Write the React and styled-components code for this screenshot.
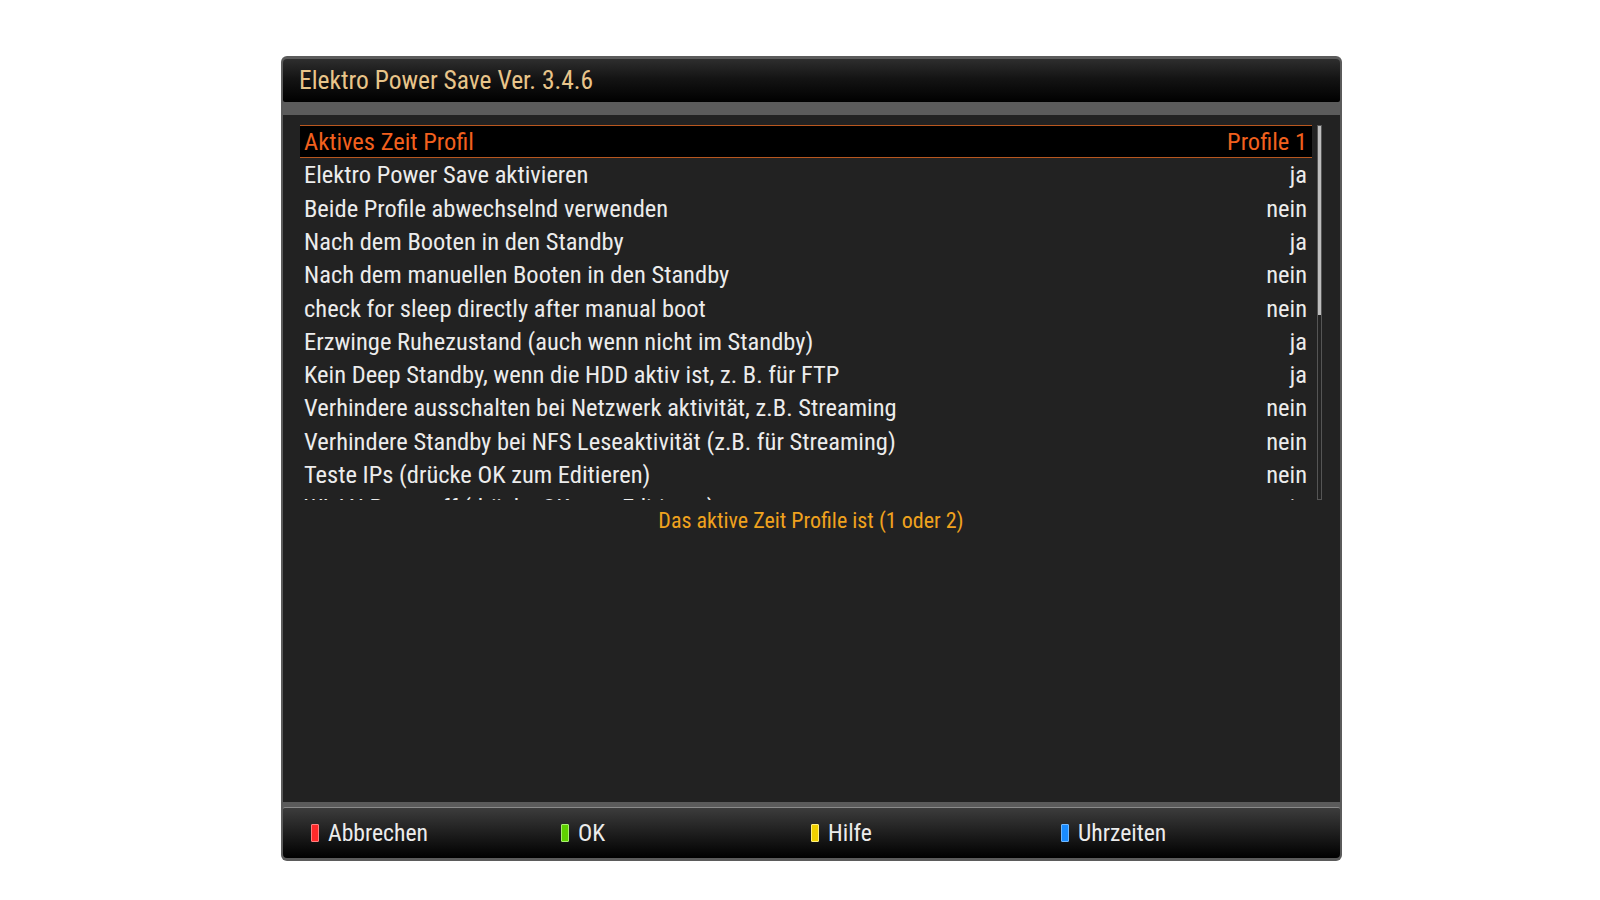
import React from 'react';
import styled, { createGlobalStyle } from 'styled-components';

const GlobalStyle = createGlobalStyle`
  body {
    margin: 0;
    background: #ffffff;
    font-family: "Roboto Condensed", Roboto, sans-serif;
    font-stretch: condensed;
  }
`;

const Page = styled.div`
  width: 1600px;
  height: 900px;
  padding: 56px 0 0 281px;
  box-sizing: border-box;
`;

const Frame = styled.div`
  width: 1061px;
  height: 805px;
  box-sizing: border-box;
  padding: 3px 2px 3px 2px;
  background: #5b5b5b;
  border-radius: 6px;
  display: flex;
  flex-direction: column;
`;

const TitleBar = styled.div`
  height: 43px;
  border-radius: 4px 4px 2px 2px;
  background: linear-gradient(to bottom, #2e2e2e 0%, #141414 45%, #000 100%);
  display: flex;
  align-items: center;
  padding-left: 16px;
  font-size: 25.5px;
  color: #e8c58a;
`;

const Content = styled.div`
  margin-top: 13px;
  height: 688px;
  background: #222222;
  padding: 10px 18px 0 17px;
  box-sizing: border-box;
  display: flex;
  flex-direction: column;
`;

const ListArea = styled.div`
  display: flex;
  gap: 5px;
  height: 375px;
`;

const List = styled.div`
  flex: 1;
  overflow: hidden;
`;

const Row = styled.div`
  height: 33.3px;
  box-sizing: border-box;
  display: flex;
  align-items: center;
  justify-content: space-between;
  padding: 0 5px 0 4px;
  font-size: 24.5px;
  white-space: nowrap;
  color: ${({ $active }) => ($active ? '#f2601e' : '#ececec')};
  background: ${({ $active }) => ($active ? '#000' : 'transparent')};
  border-top: 1px solid ${({ $active }) => ($active ? '#b8571f' : 'transparent')};
  border-bottom: 1px solid ${({ $active }) => ($active ? '#b8571f' : 'transparent')};
`;

const Scrollbar = styled.div`
  width: 5px;
  box-sizing: border-box;
  border: 1px solid #555;
  position: relative;
`;

const Thumb = styled.div`
  position: absolute;
  left: 0;
  right: 0;
  top: 0;
  height: 189px;
  background: #bdbdbd;
`;

const Description = styled.div`
  text-align: center;
  color: #f0a21e;
  font-size: 22px;
  padding-top: 8px;
`;

const Footer = styled.div`
  margin-top: 5px;
  height: 50px;
  border-radius: 2px 2px 4px 4px;
  border-top: 1px solid #8a8a8a;
  background: linear-gradient(to bottom, #3c3c3c 0%, #1e1e1e 50%, #000 100%);
  display: grid;
  grid-template-columns: repeat(4, 250px);
  padding-left: 28px;
  align-items: center;
`;

const KeyHint = styled.div`
  display: flex;
  align-items: center;
  gap: 9px;
  font-size: 23.7px;
  color: #ececec;
`;

const ColorKey = styled.span`
  width: 8px;
  height: 18px;
  box-sizing: border-box;
  background: ${({ $color }) => $color};
  border: 1px solid ${({ $edge }) => $edge};
  border-radius: 1px;
`;

const rows = [
  ['Aktives Zeit Profil', 'Profile 1'],
  ['Elektro Power Save aktivieren', 'ja'],
  ['Beide Profile abwechselnd verwenden', 'nein'],
  ['Nach dem Booten in den Standby', 'ja'],
  ['Nach dem manuellen Booten in den Standby', 'nein'],
  ['check for sleep directly after manual boot', 'nein'],
  ['Erzwinge Ruhezustand (auch wenn nicht im Standby)', 'ja'],
  ['Kein Deep Standby, wenn die HDD aktiv ist, z. B. für FTP', 'ja'],
  ['Verhindere ausschalten bei Netzwerk aktivität, z.B. Streaming', 'nein'],
  ['Verhindere Standby bei NFS Leseaktivität (z.B. für Streaming)', 'nein'],
  ['Teste IPs (drücke OK zum Editieren)', 'nein'],
  ['WLAN Poweroff (drücke OK zum Editieren)', 'ja'],
];

const keys = [
  ['#ff2a2a', '#ff8080', 'Abbrechen'],
  ['#5fd000', '#a8f070', 'OK'],
  ['#f0d000', '#fff080', 'Hilfe'],
  ['#1a8cff', '#70b8ff', 'Uhrzeiten'],
];

export default function App() {
  return (
    <Page>
      <GlobalStyle />
      <Frame>
        <TitleBar>Elektro Power Save Ver. 3.4.6</TitleBar>
        <Content>
          <ListArea>
            <List>
              {rows.map(([label, value], i) => (
                <Row key={label} $active={i === 0}>
                  <span>{label}</span>
                  <span>{value}</span>
                </Row>
              ))}
            </List>
            <Scrollbar>
              <Thumb />
            </Scrollbar>
          </ListArea>
          <Description>Das aktive Zeit Profile ist (1 oder 2)</Description>
        </Content>
        <Footer>
          {keys.map(([color, edge, label]) => (
            <KeyHint key={label}>
              <ColorKey $color={color} $edge={edge} />
              {label}
            </KeyHint>
          ))}
        </Footer>
      </Frame>
    </Page>
  );
}
